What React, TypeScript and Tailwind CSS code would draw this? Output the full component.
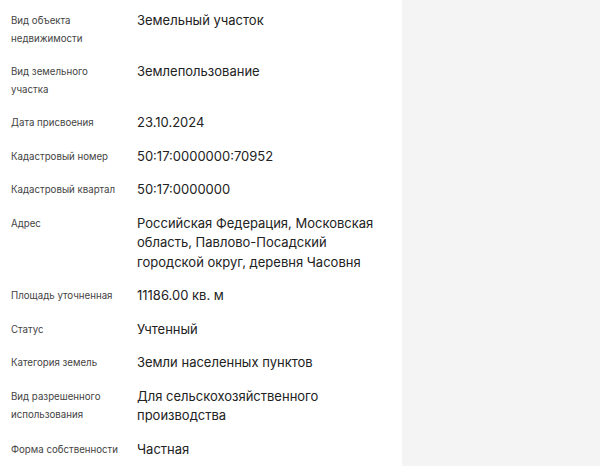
import React from "react";

const rows: [string, string][] = [
  ["Вид объекта недвижимости", "Земельный участок"],
  ["Вид земельного участка", "Землепользование"],
  ["Дата присвоения", "23.10.2024"],
  ["Кадастровый номер", "50:17:0000000:70952"],
  ["Кадастровый квартал", "50:17:0000000"],
  ["Адрес", "Российская Федерация, Московская область, Павлово-Посадский городской округ, деревня Часовня"],
  ["Площадь уточненная", "11186.00 кв. м"],
  ["Статус", "Учтенный"],
  ["Категория земель", "Земли населенных пунктов"],
  ["Вид разрешенного использования", "Для сельскохозяйственного производства"],
  ["Форма собственности", "Частная"],
];

export default function App() {
  return (
    <div className="flex h-[466px] w-[600px] overflow-hidden bg-white" style={{ fontFamily: "Inter, 'Noto Sans', sans-serif" }}>
      <div className="w-[402px] shrink-0 bg-white pl-[11px] pt-[11px]">
        <div className="flex flex-col gap-[14px]">
          {rows.map(([l, v]) => (
            <div key={l} className="flex">
              <div className="w-[126px] shrink-0 pr-[14px] pt-[1px] text-[9.7px] leading-[18px] text-[#444]">{l}</div>
              <div className="w-[250px] text-[13px] leading-[19.5px] text-[#222]">{v}</div>
            </div>
          ))}
        </div>
      </div>
      <div className="flex-1 bg-[#f4f4f4]" />
    </div>
  );
}
